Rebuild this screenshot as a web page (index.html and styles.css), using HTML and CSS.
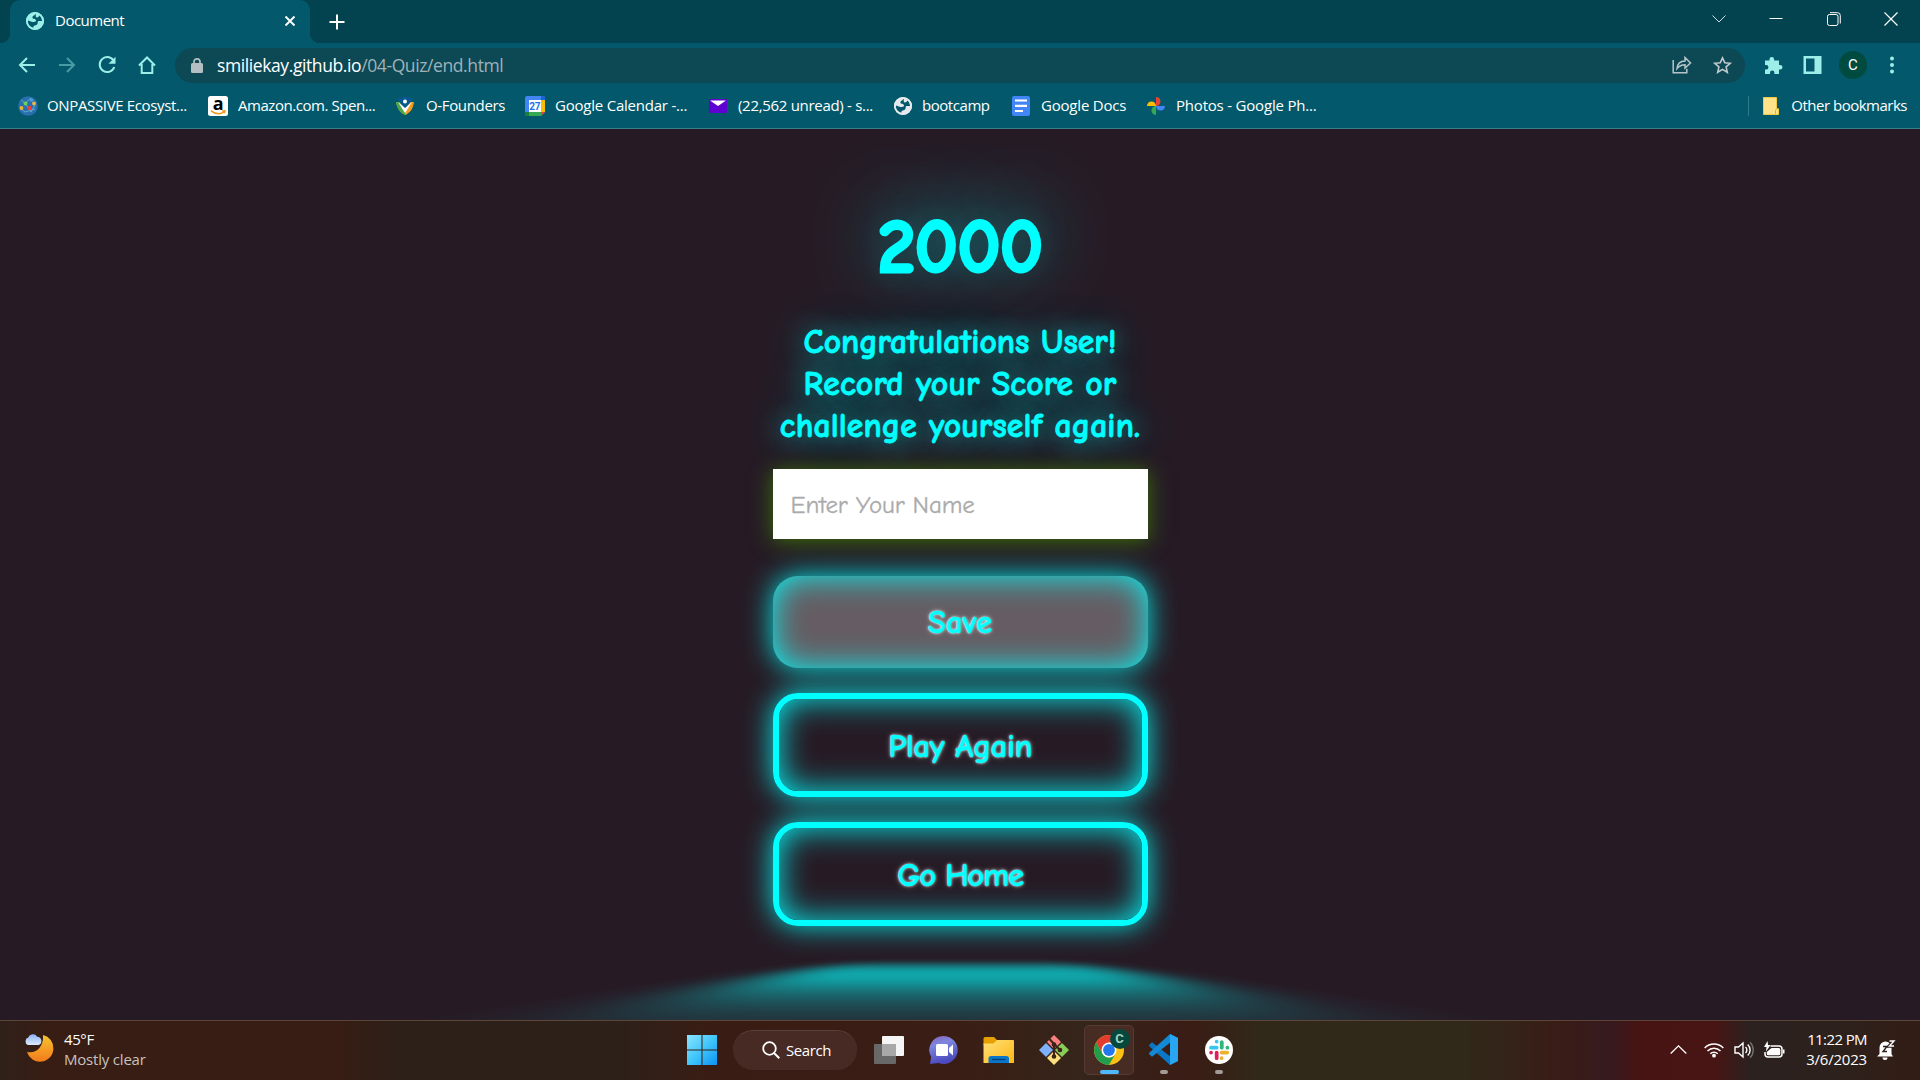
FILE: index.html
```html
<!DOCTYPE html>
<html lang="en">
<head>
<meta charset="utf-8">
<title>Document</title>
<link rel="stylesheet" href="styles.css">
</head>
<body>
<svg class="defs" width="0" height="0">
  <defs>
    <symbol id="globe" viewBox="0 0 18 18">
      <circle cx="9" cy="9" r="9" fill="currentColor"/>
      <path d="M10 1.800C8 4 6.400 3.600 6.400 5.600c0 1.700 3.600 1 3.600 3 0 1.400-1.600 1.600-3.300 1.300C5 9.600 3.500 8.700 1.600 8.400c0 3.900 2.400 6.700 5.600 7.500 0-1.800 1-2.300 2.500-2.700 1.800-.5 2.100-1.700 2-3.200-.1-1.300 1.900-1.100 4.300-.9.200-2.300-.7-4.400-2.400-5.800-.5 1.300-1.600 2.300-2.900 2.100C9.400 5.200 9.600 3.300 10 1.800z" fill="var(--land)"/>
      <circle cx="9" cy="9" r="8.100" fill="none" stroke="currentColor" stroke-width="1.800"/>
    </symbol>
  </defs>
</svg>
<div class="screen">
  <header class="browser">
    <div class="tabs">
      <div class="tab">
        <svg class="favicon mint" width="18" height="18"><use href="#globe"/></svg>
        <span class="tab-title">Document</span>
        <svg width="12" height="12" viewBox="0 0 12 12"><path d="M1.500 1.500l9 9m0-9l-9 9" stroke="#fff" stroke-width="1.900"/></svg>
      </div>
      <svg class="new-tab" width="16" height="16" viewBox="0 0 16 16"><path d="M8 .5v15M.5 8h15" stroke="#fff" stroke-width="2"/></svg>
      <div class="window-controls">
        <svg width="14" height="14" viewBox="0 0 14 14"><path d="M.5 3.500L7 10l6.500-6.500" fill="none" stroke="#cfe0e2"/></svg>
        <svg width="14" height="14" viewBox="0 0 14 14"><path d="M.5 6.500h13" stroke="#fff"/></svg>
        <svg width="14" height="14" viewBox="0 0 14 14"><g fill="none" stroke="#fff"><rect x=".5" y="2.500" width="10.500" height="11" rx="2"/><path d="M3 .7h7.500a2.800 2.800 0 0 1 2.800 2.800v8"/></g></svg>
        <svg width="14" height="14" viewBox="0 0 14 14"><path d="M.5.5l13 13m0-13l-13 13" stroke="#fff" stroke-width="1.200"/></svg>
      </div>
    </div>
    <div class="toolbar">
      <svg width="18" height="18" viewBox="0 0 18 18"><path d="M17 9H2m7-7L2 9l7 7" class="line"/></svg>
      <svg class="faded" width="18" height="18" viewBox="0 0 18 18"><path d="M1 9h15M9 2l7 7-7 7" class="line"/></svg>
      <svg width="18" height="18" viewBox="0 0 18 18"><path d="M15.500 4.500A7.500 7.500 0 1 0 16.300 11" class="line"/><path d="M17.500.8v7h-7z" fill="#9deee9"/></svg>
      <svg width="18" height="18" viewBox="0 0 18 18"><path d="M1 9.500L9 1.500l8 8M3.700 8v9h10.600V8" class="line"/></svg>
      <div class="omnibox">
        <svg width="12" height="15" viewBox="0 0 12 15"><rect y="5" width="12" height="10" rx="1.500" fill="#b4bfc3"/><path d="M3 6V3.800a3 3 0 0 1 6 0V6" fill="none" stroke="#b4bfc3" stroke-width="1.700"/></svg>
        <span class="url">smiliekay.github.io<span class="path">/04-Quiz/end.html</span></span>
        <svg width="20" height="18" viewBox="0 0 20 18"><g fill="none" stroke="#b8c5c8" stroke-width="1.500"><path d="M1.200 4v12.800h13.600v-4"/><path d="M5 12.500C5.500 8 8.500 5 13 5V1.500L18.500 7 13 12V8.700c-4 0-6 1.300-8 3.800z"/></g></svg>
        <svg width="19" height="18" viewBox="0 0 19 18"><path d="M9.500 1.800l2.300 5 5.400.5-4.100 3.600 1.200 5.400-4.800-2.900-4.800 2.900 1.200-5.400L1.800 7.300l5.400-.5z" fill="none" stroke="#c0cbce" stroke-width="1.600"/></svg>
      </div>
      <div class="extensions">
        <svg width="19" height="19" viewBox="0 0 19 19"><path d="M1 4.500h4.500V3.200a2.300 2.300 0 0 1 4.600 0v1.300H15V9h1.200a2.300 2.300 0 0 1 0 4.600H15V18h-4.600v-1.200a2.200 2.200 0 0 0-4.400 0V18H1v-4.500h1.200a2.200 2.200 0 0 0 0-4.500H1z" fill="#9deee9"/></svg>
        <svg width="19" height="18" viewBox="0 0 19 18"><path fill-rule="evenodd" d="M.5 0h18v18H.5zM3 2.500v13h8.500v-13z" fill="#9deee9"/></svg>
        <span class="avatar">C</span>
        <svg width="4" height="18" viewBox="0 0 4 18"><g fill="#9deee9"><circle cx="2" cy="2.500" r="2"/><circle cx="2" cy="9" r="2"/><circle cx="2" cy="15.500" r="2"/></g></svg>
      </div>
    </div>
    <nav class="bookmarks">
      <a class="bm bm-onpassive"><svg width="20" height="20" viewBox="0 0 20 20"><circle cx="10" cy="10" r="9.800" fill="#2a6fae"/><path d="M3 4l4 3 6-5M2 12l5 4 10-3M7 7l6 9 4-7" stroke="#5fa7ce" fill="none"/><circle cx="7.500" cy="7.500" r="2" fill="#68d452"/><circle cx="13.500" cy="4" r="1.800" fill="#45a1db"/><circle cx="3.500" cy="12" r="1.900" fill="#f5b02e"/><circle cx="11.500" cy="12" r="2.200" fill="#e8403a"/><circle cx="16" cy="7.500" r="1.900" fill="#edb53a"/></svg><span>ONPASSIVE Ecosyst...</span></a>
      <a class="bm bm-amazon"><svg width="20" height="20" viewBox="0 0 20 20"><rect width="20" height="20" rx="2.500" fill="#fff"/><text x="10" y="13.500" text-anchor="middle" font-family="Open Sans" font-weight="bold" font-size="18" fill="#000">a</text><path d="M3 14.800c4.500 3.500 9.500 3.500 13.500.8m-2.300-.5l2.800-.3-.6 2.500" fill="none" stroke="#f79a1c" stroke-width="1.500"/></svg><span>Amazon.com. Spen...</span></a>
      <a class="bm bm-founders"><svg width="18" height="18" viewBox="0 0 18 18"><path d="M0 5h4l5 7 5-7h4c-1 7-4 11-9 13C4 16 1 11 0 5z" fill="#f29d20"/><path d="M0 5h4l5 7v6C4 16 1 11 0 5z" fill="#48a848"/><path d="M1 2c5-3 11-3 16 0l-5 6-3 4-3-4z" fill="#075891"/><path d="M2 5l7 6 7-6-5 8-2 3-2-3z" fill="#fff"/><circle cx="9" cy="4.500" r="2" fill="#fff"/></svg><span>O-Founders</span></a>
      <a class="bm bm-calendar"><svg width="20" height="20" viewBox="0 0 20 20"><path d="M0 2a2 2 0 0 1 2-2h16a2 2 0 0 1 2 2v14l-4 4H2a2 2 0 0 1-2-2z" fill="#4285f4"/><path d="M16 4h4v12h-4z" fill="#fbbc04"/><path d="M4 16h12v4H4z" fill="#34a853"/><path d="M0 16h4v4H2a2 2 0 0 1-2-2z" fill="#188038"/><path d="M16 16h4l-4 4z" fill="#ea4335"/><path d="M16 0h2a2 2 0 0 1 2 2v2h-4z" fill="#1967d2"/><path d="M4 4h12v12H4z" fill="#fff"/><text x="9.800" y="13.800" text-anchor="middle" font-family="Roboto" font-weight="bold" font-size="10" fill="#1a73e8">27</text></svg><span>Google Calendar -...</span></a>
      <a class="bm bm-mail"><svg width="18" height="14" viewBox="0 0 18 14"><rect width="18" height="14" rx="1" fill="#5f01d1"/><path d="M1 1.500h16L9 7z" fill="#fff"/></svg><span>(22,562 unread) - s...</span></a>
      <a class="bm bm-bootcamp"><svg class="pale" width="18" height="18"><use href="#globe"/></svg><span>bootcamp</span></a>
      <a class="bm bm-docs"><svg width="20" height="20" viewBox="0 0 20 20"><rect x="1" width="18" height="20" rx="2" fill="#4285f4"/><path d="M4 4.500h12M4 9.800h12M4 15h8" stroke="#fff" stroke-width="2.200"/></svg><span>Google Docs</span></a>
      <a class="bm bm-photos"><svg width="18" height="18" viewBox="0 0 18 18"><path d="M9 0a4.500 4.500 0 0 1 0 9z" fill="#ea4335"/><path d="M18 9a4.500 4.500 0 0 1-9 0z" fill="#4285f4"/><path d="M9 18a4.500 4.500 0 0 1 0-9z" fill="#34a853"/><path d="M0 9a4.500 4.500 0 0 1 9 0z" fill="#fbbc04"/></svg><span>Photos - Google Ph...</span></a>
      <a class="bm bm-other"><svg width="16" height="18" viewBox="0 0 16 18"><path d="M.5.5h13v11.300h2v5.700H.5z" fill="#ffe28a" stroke="#f5ca43"/><path d="M12.500 17v-3.500l1-1.700" fill="none" stroke="#ddb02d"/></svg><span>Other bookmarks</span></a>
    </nav>
  </header>

  <main class="page">
    <h1 class="score">2000</h1>
    <h2 class="message"><span class="l1">Congratulations User!</span><span class="l2">Record your Score or</span><span class="l3">challenge yourself again.</span></h2>
    <form class="form">
      <input class="name" type="text" placeholder="Enter Your Name">
      <button class="btn save" type="button" disabled>Save</button>
      <a class="btn play">Play Again</a>
      <a class="btn home">Go Home</a>
    </form>
  </main>

  <footer class="taskbar">
    <div class="weather">
      <svg width="30" height="30" viewBox="0 0 30 30"><defs><linearGradient id="moon" x2="0" y2="1"><stop stop-color="#f6c52f"/><stop offset="1" stop-color="#f27a1b"/></linearGradient><linearGradient id="cloud" x2="0" y2="1"><stop stop-color="#8db4f4"/><stop offset="1" stop-color="#dce9ff"/></linearGradient></defs><path d="M19 2a13.500 13.500 0 1 1-16 17C13 21 20 13 19 2z" fill="url(#moon)"/><path d="M4 12a4 4 0 0 1 .2-7.500 5 5 0 0 1 9-.8 4.300 4.300 0 0 1 1.500 8.300z" fill="url(#cloud)"/></svg>
      <div class="weather-text"><span class="temp">45°F</span><span class="sky">Mostly clear</span></div>
    </div>
    <div class="apps">
      <svg class="windows" width="30" height="30" viewBox="0 0 30 30"><defs><linearGradient id="win" gradientUnits="userSpaceOnUse" x2="30" y2="30"><stop stop-color="#8be5ff"/><stop offset=".5" stop-color="#41c6fb"/><stop offset="1" stop-color="#0a94f5"/></linearGradient></defs><path d="M0 0h14.500v14.500H0zM15.500 0H30v14.500H15.500zM0 15.500h14.500V30H0zM15.500 15.500H30V30H15.500z" fill="url(#win)"/></svg>
      <div class="search"><svg width="18" height="18" viewBox="0 0 18 18"><circle cx="7.500" cy="7.500" r="6.300" fill="none" stroke="#fff" stroke-width="1.800"/><path d="M12 12l5.300 5.300" stroke="#fff" stroke-width="2"/></svg><span>Search</span></div>
      <div class="app"><svg width="30" height="30" viewBox="0 0 30 30"><rect y="9" width="22" height="20" rx="1" fill="#686868"/><rect x="8" y="1" width="22" height="20" rx="1" fill="#f5f5f5"/><path d="M8 9h14v12H8z" fill="#a8a8a8"/></svg></div>
      <div class="app"><svg width="30" height="30" viewBox="0 0 30 30"><defs><linearGradient id="chat" x2=".3" y2="1"><stop stop-color="#8a62b8"/><stop offset=".35" stop-color="#7d86df"/><stop offset="1" stop-color="#4b49bf"/></linearGradient></defs><path d="M15 1a14 14 0 1 1-5.500 27L1 29l1.200-7A14 14 0 0 1 15 1z" fill="url(#chat)"/><rect x="7" y="9" width="12" height="12" rx="1.500" fill="#fff"/><path d="M20 13l4-3.500v11L20 17z" fill="#fff"/></svg></div>
      <div class="app"><svg width="31" height="30" viewBox="0 0 31 30"><defs><linearGradient id="folder" x2="1" y2="1"><stop stop-color="#ffe07a"/><stop offset="1" stop-color="#fdb813"/></linearGradient></defs><path d="M.5 3.500A1.500 1.500 0 0 1 2 2h9l3 3v5H.5z" fill="#e6a100"/><path d="M.5 8.500h10L14 5h16a1 1 0 0 1 1 1v22H.5z" fill="url(#folder)"/><path d="M5.500 28V23.500A2.500 2.500 0 0 1 8 21h15.500a2.500 2.500 0 0 1 2.500 2.500V28z" fill="#0b76c9"/><path d="M9 24.500h13.500" stroke="#083f73" stroke-width="1.300"/></svg></div>
      <div class="app"><svg width="30" height="30" viewBox="0 0 30 30"><path d="M15 0l7 7-7 7-7-7z" fill="#fb8080"/><path d="M7 8l7 7-7 7-7-7z" fill="#7eb0fb"/><path d="M23 8l7 7-7 7-7-7z" fill="#86ce55"/><path d="M15 16l7 7-7 7-7-7z" fill="#fde07c"/><path d="M10.500 4l4.500 5v13m0-13l6 6" stroke="#3b2117" stroke-width="2" fill="none"/><g fill="#3b2117"><circle cx="15" cy="9.500" r="2.300"/><circle cx="15" cy="21.500" r="2.300"/><circle cx="21" cy="15" r="2.300"/></g></svg></div>
      <div class="app active"><svg width="30" height="30" viewBox="0 0 32 32"><circle cx="16" cy="16" r="16" fill="#fbc116"/><path d="M2.200 8A16 16 0 0 1 29.800 8H16L9.100 20z" fill="#e33b2e"/><path d="M2.200 8L9.100 20a8 8 0 0 0 13.800 0L16 32A16 16 0 0 1 2.200 8z" fill="#229c4d"/><circle cx="16" cy="16" r="8" fill="#fff"/><circle cx="16" cy="16" r="6.300" fill="#2478ed"/></svg><span class="badge">C</span></div>
      <div class="app running"><svg width="31" height="31" viewBox="0 0 31 31"><path d="M22 0l8 4v23l-8 4L1.500 12.500a1.500 1.500 0 0 1 0-2L4 8.300l18 14z" fill="#0b76c4"/><path d="M22 0v8.700L4 22.700l-2.500-2.200a1.500 1.500 0 0 1 0-2z" fill="#1288d6"/><path d="M22 0l8 4v23l-8 4z" fill="#29a6f1"/></svg></div>
      <div class="app running"><svg width="28" height="28" viewBox="0 0 30 30"><circle cx="15" cy="15" r="15" fill="#fff"/><g fill="none" stroke-width="4" stroke-linecap="round"><path d="M12.500 6v0M6.500 12.500h6" stroke="#36c5f0"/><path d="M18 6.500v6M24 12.500v0" stroke="#2eb67d"/><path d="M17.800 17.800h6M17.800 23.800v0" stroke="#ecb22e"/><path d="M12.500 17.800v6M6.500 17.800v0" stroke="#e01e5a"/></g></svg></div>
    </div>
    <div class="tray">
      <svg class="t-up" width="17" height="9" viewBox="0 0 17 9"><path d="M.7 8.500l7.800-7.700 7.800 7.700" fill="none" stroke="#fff" stroke-width="1.300"/></svg>
      <svg class="t-wifi" width="20" height="16" viewBox="0 0 20 16"><g fill="none" stroke="#fff" stroke-width="1.500"><path d="M.7 6a13 13 0 0 1 18.600 0M3.500 9a9 9 0 0 1 13 0M6.300 11.700a5.300 5.300 0 0 1 7.400 0"/></g><circle cx="10" cy="13.700" r="1.900" fill="#fff"/></svg>
      <svg class="t-vol" width="20" height="18" viewBox="0 0 20 18"><g fill="none" stroke="#fff" stroke-width="1.400"><path d="M1 6h3.500L9 2v14l-4.500-4H1zM11.500 6a4 4 0 0 1 0 6M13.700 3.500a7.500 7.500 0 0 1 0 11"/><path d="M16 1.200a11 11 0 0 1 0 15.600" opacity=".35"/></g></svg>
      <svg class="t-bat" width="21" height="17" viewBox="0 0 21 17"><path d="M6.500 5H15a3 3 0 0 1 3 3v5a3 3 0 0 1-3 3H4a3 3 0 0 1-3-3v-2" fill="none" stroke="#fff" stroke-width="1.500"/><path d="M7.500 7h7.300a1.500 1.500 0 0 1 1.500 1.500v4.300a1.500 1.500 0 0 1-1.500 1.500H4.300a1.500 1.500 0 0 1-1.500-1.500V11zM19 8.500h1.500v4H19zM3.500 0L0 6h2.500L2 10.500 6.500 4H4z" fill="#fff"/></svg>
      <div class="clock"><span>11:22 PM</span><span class="date">3/6/2023</span></div>
      <svg class="t-bell" width="18" height="20" viewBox="0 0 18 20"><path d="M2.500 14V7.500a6 6 0 0 1 12 0V14l1.500 2.500H0zM5.500 17.500h5a2.500 2.500 0 0 1-5 0z" fill="#fff"/><path d="M6 6.500h4L6 11.500h4" fill="none" stroke="#2e211d" stroke-width="1.400"/><path d="M12.500 1H17l-4.500 5H17" fill="none" stroke="#2e211d" stroke-width="3.600"/><path d="M12.500 1H17l-4.500 5H17" fill="none" stroke="#fff" stroke-width="1.400"/></svg>
    </div>
  </footer>
</div>
</body>
</html>
```

FILE: styles.css
```css
:root {
  --neon: #00ffff;
  --bg: #261b25;
  --chrome: #03596b;
  --mint: #9deee9;
  --land: var(--chrome);
  --ui: "Open Sans", "Noto Sans", sans-serif;
  --fun: "Comic Sans MS", "Comic Neue", "Lato", sans-serif;
}

* { box-sizing: border-box; }
body { margin: 0; font-family: var(--ui); color: #fff; }
svg { display: block; flex: none; overflow: visible; }
.defs { position: absolute; }
.screen { width: 1920px; height: 1080px; display: flex; flex-direction: column; overflow: hidden; background: var(--bg); }

/* Browser chrome */
.browser { height: 129px; flex: none; background: var(--chrome); border-bottom: 1px solid #3a7e8b; }
.tabs { height: 43px; display: flex; align-items: center; background: #02434f; padding-left: 10px; }
.tab { position: relative; width: 300px; height: 43px; display: flex; align-items: center; padding: 0 14px 2px 16px; border-radius: 10px 10px 0 0; background: var(--chrome); }
.tab::before, .tab::after { content: ""; position: absolute; bottom: 0; width: 10px; height: 10px; }
.tab::before { left: -10px; background: radial-gradient(circle at 0 0, transparent 10px, var(--chrome) 10.5px); }
.tab::after { right: -10px; background: radial-gradient(circle at 100% 0, transparent 10px, var(--chrome) 10.5px); }
.mint { color: var(--mint); }
.pale { color: #e5eaed; }
.tab-title { flex: 1; margin-left: 11px; padding-bottom: 2px; font-size: 15px; letter-spacing: -.5px; }
.new-tab { margin-left: 19px; }
.window-controls { margin-left: auto; margin-right: 22px; padding-bottom: 6px; display: flex; gap: 43.500px; }
.toolbar { height: 44px; display: flex; align-items: center; gap: 22px; padding-left: 18px; }
.line { fill: none; stroke: var(--mint); stroke-width: 2; }
.faded { opacity: .45; }
.omnibox { width: 1570px; height: 35px; margin-left: -3px; border-radius: 18px; background: #0d4855; display: flex; align-items: center; gap: 21px; padding: 0 13px 0 16px; }
.url { flex: 1; margin-left: -7px; font-size: 17.500px; letter-spacing: -.4px; white-space: nowrap; }
.path { color: #9fb3b9; }
.extensions { display: flex; align-items: center; gap: 20px; margin-left: -3px; }
.avatar { width: 28px; height: 28px; margin: 0 3px 0 -3px; border-radius: 50%; background: #004b40; font: 15px/28px Roboto, sans-serif; text-align: center; }
.bookmarks { height: 38px; display: flex; align-items: center; padding: 0 13px 0 18px; font-size: 15px; letter-spacing: -.35px; }
.bm { display: flex; align-items: center; gap: 10px; white-space: nowrap; flex: none; }
.bm span { padding-bottom: 2px; }
.bm-onpassive { width: 190px; gap: 9px; }
.bm-amazon { width: 188px; letter-spacing: -.45px; }
.bm-founders { width: 129px; gap: 12px; }
.bm-calendar { width: 184px; letter-spacing: -.22px; }
.bm-mail { width: 185px; gap: 11px; letter-spacing: -.3px; }
.bm-bootcamp { width: 117px; gap: 10px; letter-spacing: -.45px; }
.bm-docs { width: 136px; gap: 10px; letter-spacing: -.2px; }
.bm-photos { gap: 11px; letter-spacing: -.2px; }
.bm-other { margin-left: auto; height: 20px; padding-left: 14px; gap: 12px; border-left: 1px solid #2d7d8b; letter-spacing: -.5px; }

/* Quiz result */
.page { position: relative; flex: 1; min-height: 0; overflow: hidden; display: flex; flex-direction: column; align-items: center; font-family: var(--fun); font-variant-ligatures: none; color: var(--neon); }
.score { height: 96px; margin: 71px 0 0; font-size: 76px; line-height: 96px; font-weight: 700; letter-spacing: -.8px; -webkit-text-stroke: 3px var(--neon); text-shadow: 0 0 30px rgba(0,255,255,.2), 0 -10px 75px rgba(0,255,255,.75); }
.message { margin: 25px 0 0; display: flex; flex-direction: column; align-items: center; font-size: 33.500px; line-height: 42px; font-weight: 700; -webkit-text-stroke: .8px var(--neon); text-shadow: 0 0 26px rgba(0,255,255,.6), 0 0 42px rgba(0,255,255,.6); white-space: nowrap; }
.l2 { letter-spacing: .2px; }
.l3 { letter-spacing: .15px; }
.form { width: 375px; margin-top: 22px; display: flex; flex-direction: column; }
.name { height: 70px; margin-bottom: 37px; padding: 0 18px; border: 0; border-radius: 0; background: #fff; box-shadow: 0 2px 20px rgba(64,140,0,.75); font-family: var(--fun); font-size: 25px; letter-spacing: -.15px; outline: 0; }
.name::placeholder { color: #aaa; -webkit-text-stroke: .3px #aaa; }
.btn { position: relative; height: 104px; margin-bottom: 25px; padding-top: 2px; display: flex; align-items: center; justify-content: center; border: 6px solid var(--neon); border-radius: 25px; font: 700 33px/1 var(--fun); color: var(--neon); -webkit-text-stroke: .4px var(--neon); text-shadow: 0 0 3px #fff, 0 0 6px rgba(255,255,255,.3); box-shadow: inset 0 0 32px rgba(0,255,255,.95), 0 0 28px rgba(0,255,255,.9); }
.save { height: 92px; border: 0; background: #655d63; }
.play { letter-spacing: -.5px; }
.home { letter-spacing: -1.400px; }
.home::before { content: ""; position: absolute; top: 110%; left: 0; width: 100%; height: 100%; background: var(--neon); transform: perspective(32px) rotateX(40deg) scale(1, .35); filter: blur(32px); opacity: .7; }

/* Taskbar */
.taskbar { height: 60px; flex: none; display: flex; align-items: center; padding-bottom: 2px; border-top: 1px solid #5b4639; background: linear-gradient(90deg, #30201a 0, #371d13 50px, #371d13 340px, #2d2019 400px, #2d2019 620px, #391d14 710px, #3a1d14 950px, #35251a 1080px, #3a1c15 1190px, #30291a 1260px, #30291a 1460px, #391c16 1560px, #371a1e 1610px, #471413 1640px, #471513 1715px, #2b211f 1750px, #2d211c 1840px, #331c15 1920px); }
.weather { width: 687px; padding-left: 24px; display: flex; gap: 10px; }
.weather svg { margin-top: 4px; }
.weather-text { display: flex; flex-direction: column; padding-bottom: 2px; font-size: 15px; line-height: 20px; letter-spacing: -.2px; }
.temp { letter-spacing: -.4px; }
.sky { color: #c9c1be; }
.apps { display: flex; align-items: center; }
.search { width: 124px; height: 40px; margin: 0 4px 0 16px; display: flex; align-items: center; justify-content: center; gap: 6px; border-radius: 20px; border-top: 1px solid #58403a; background: #462a23; font-size: 15px; letter-spacing: -.4px; }
.search svg { margin-left: 3px; }
.search span { padding-bottom: 1px; }
.app { position: relative; width: 50px; height: 50px; margin: 0 2.500px; display: flex; align-items: center; justify-content: center; border-radius: 5px; }
.active { background: #472c24; border: 1px solid #563b33; }
.active::after, .running::after { content: ""; position: absolute; bottom: 1px; left: 15px; width: 19px; height: 4px; border-radius: 2px; background: #4db9fb; }
.active::after { bottom: 0; }
.running::after { left: 21px; width: 8px; background: #a49b95; }
.badge { position: absolute; right: 3px; top: 3px; width: 20px; height: 20px; border-radius: 50%; background: #05483e; color: #a4d0c6; font: 700 13px/20px Roboto, sans-serif; text-align: center; }
.tray { margin-left: auto; margin-right: 25px; display: flex; align-items: center; }
.t-wifi { margin-left: 17px; }
.t-vol { margin-left: 10px; }
.t-bat { margin-left: 10px; }
.clock { width: 72px; margin: 0 10px 2px; display: flex; flex-direction: column; align-items: flex-end; font-size: 15px; line-height: 20px; letter-spacing: -.6px; white-space: nowrap; }
.date { letter-spacing: -.2px; }
```
